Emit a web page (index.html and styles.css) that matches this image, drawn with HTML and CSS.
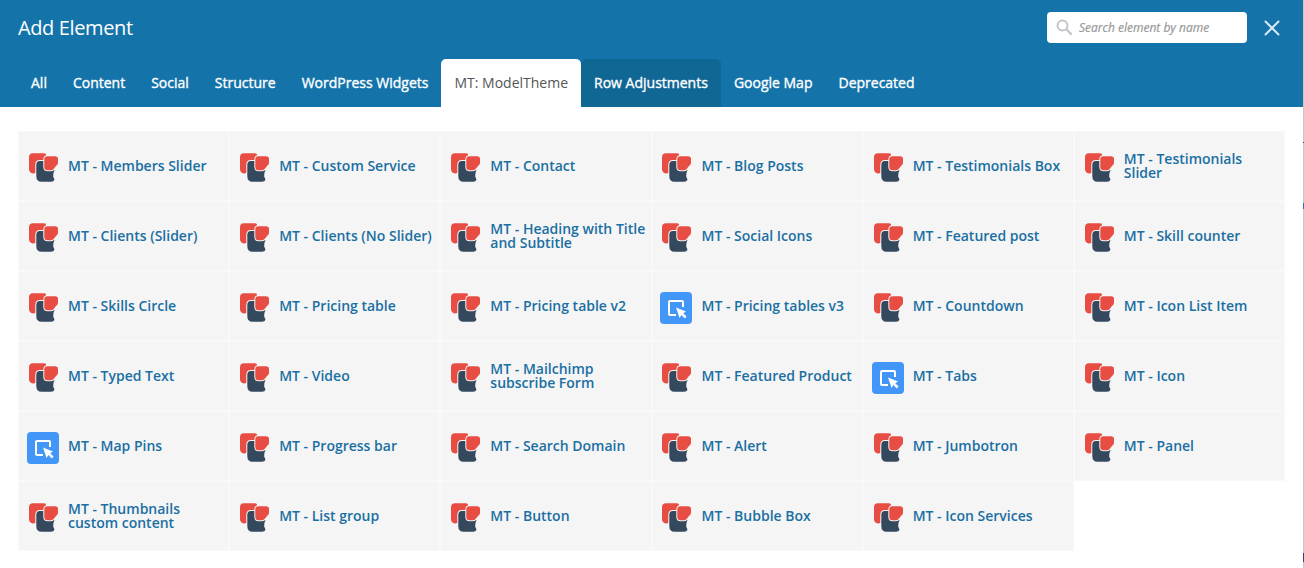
FILE: index.html
```html
<!DOCTYPE html>
<html lang="en">
<head>
<meta charset="utf-8">
<title>Add Element</title>
<link rel="stylesheet" href="styles.css">
</head>
<body>
<svg class="defs" aria-hidden="true">
  <symbol id="mt" viewBox="0 0 32 32">
    <path fill="#e84d44" d="M6 1.200H17Q19.500 1.200 19 3.500L18 8L10 20.300Q8 21.600 6 21.400Q2 21 2 17V5.200Q2 1.200 6 1.200Z"/>
    <path fill="#35495e" stroke="#f5f5f5" stroke-width="2" paint-order="stroke" d="M12.800 9H18V18H27.500Q26 21 26.200 24.500L27.500 27.500Q27 29.800 24 29.800H14.500Q9.300 29.800 9.300 24V13Q9.300 9 12.800 9Z"/>
    <path fill="#e84d44" stroke="#f5f5f5" stroke-width="2" paint-order="stroke" d="M20.500 4.200H28Q31 4.200 31 7V11Q31 12.500 29 14L27 16.500Q26 18.200 24 18.200H20.500Q17.300 18.200 17.300 15V7.500Q17.300 4.200 20.500 4.200Z"/>
  </symbol>
  <symbol id="pick" viewBox="0 0 32 32">
    <rect width="32" height="32" rx="4" fill="#4296f7"/>
    <path fill="none" stroke="#fff" stroke-width="2" stroke-linejoin="round" d="M16 23H10Q9 23 9 22V10Q9 9 10 9H22Q23 9 23 10V15"/>
    <path fill="#fff" d="M16 15.500L26 19.400L23.200 21.200L26.600 24.600L24.800 26.400L21.400 23L19.600 26Z"/>
  </symbol>
</svg>
<div class="page">
<div class="panel">
  <header class="header">
    <div class="topbar">
      <h1 class="title">Add Element</h1>
      <label class="search">
        <svg class="search-icon" viewBox="0 0 18 18"><circle cx="6.500" cy="6.500" r="5" fill="none" stroke="#c3c5cb" stroke-width="2"/><path d="M10.300 10.300L15.600 15.600" stroke="#c3c5cb" stroke-width="2.200"/></svg>
        <input class="search-input" type="text" placeholder="Search element by name">
      </label>
      <svg class="close" viewBox="0 0 16 16"><path d="M1.500 1.500L14.500 14.500M14.500 1.500L1.500 14.500" stroke="#d9e9f4" stroke-width="2" stroke-linecap="round"/></svg>
    </div>
    <nav class="tabs">
      <a class="tab">All</a>
      <a class="tab">Content</a>
      <a class="tab">Social</a>
      <a class="tab">Structure</a>
      <a class="tab">WordPress Widgets</a>
      <a class="tab active">MT: ModelTheme</a>
      <a class="tab hover">Row Adjustments</a>
      <a class="tab">Google Map</a>
      <a class="tab">Deprecated</a>
    </nav>
  </header>
  <main class="grid">
    <div class="item"><svg class="icon"><use href="#mt"/></svg><span class="label">MT - Members Slider</span></div>
    <div class="item"><svg class="icon"><use href="#mt"/></svg><span class="label">MT - Custom Service</span></div>
    <div class="item"><svg class="icon"><use href="#mt"/></svg><span class="label">MT - Contact</span></div>
    <div class="item"><svg class="icon"><use href="#mt"/></svg><span class="label">MT - Blog Posts</span></div>
    <div class="item"><svg class="icon"><use href="#mt"/></svg><span class="label">MT - Testimonials Box</span></div>
    <div class="item"><svg class="icon"><use href="#mt"/></svg><span class="label">MT - Testimonials Slider</span></div>
    <div class="item"><svg class="icon"><use href="#mt"/></svg><span class="label">MT - Clients (Slider)</span></div>
    <div class="item"><svg class="icon"><use href="#mt"/></svg><span class="label">MT - Clients (No Slider)</span></div>
    <div class="item"><svg class="icon"><use href="#mt"/></svg><span class="label">MT - Heading with Title and Subtitle</span></div>
    <div class="item"><svg class="icon"><use href="#mt"/></svg><span class="label">MT - Social Icons</span></div>
    <div class="item"><svg class="icon"><use href="#mt"/></svg><span class="label">MT - Featured post</span></div>
    <div class="item"><svg class="icon"><use href="#mt"/></svg><span class="label">MT - Skill counter</span></div>
    <div class="item"><svg class="icon"><use href="#mt"/></svg><span class="label">MT - Skills Circle</span></div>
    <div class="item"><svg class="icon"><use href="#mt"/></svg><span class="label">MT - Pricing table</span></div>
    <div class="item"><svg class="icon"><use href="#mt"/></svg><span class="label">MT - Pricing table v2</span></div>
    <div class="item"><svg class="icon"><use href="#pick"/></svg><span class="label">MT - Pricing tables v3</span></div>
    <div class="item"><svg class="icon"><use href="#mt"/></svg><span class="label">MT - Countdown</span></div>
    <div class="item"><svg class="icon"><use href="#mt"/></svg><span class="label">MT - Icon List Item</span></div>
    <div class="item"><svg class="icon"><use href="#mt"/></svg><span class="label">MT - Typed Text</span></div>
    <div class="item"><svg class="icon"><use href="#mt"/></svg><span class="label">MT - Video</span></div>
    <div class="item"><svg class="icon"><use href="#mt"/></svg><span class="label">MT - Mailchimp subscribe Form</span></div>
    <div class="item"><svg class="icon"><use href="#mt"/></svg><span class="label">MT - Featured Product</span></div>
    <div class="item"><svg class="icon"><use href="#pick"/></svg><span class="label">MT - Tabs</span></div>
    <div class="item"><svg class="icon"><use href="#mt"/></svg><span class="label">MT - Icon</span></div>
    <div class="item"><svg class="icon"><use href="#pick"/></svg><span class="label">MT - Map Pins</span></div>
    <div class="item"><svg class="icon"><use href="#mt"/></svg><span class="label">MT - Progress bar</span></div>
    <div class="item"><svg class="icon"><use href="#mt"/></svg><span class="label">MT - Search Domain</span></div>
    <div class="item"><svg class="icon"><use href="#mt"/></svg><span class="label">MT - Alert</span></div>
    <div class="item"><svg class="icon"><use href="#mt"/></svg><span class="label">MT - Jumbotron</span></div>
    <div class="item"><svg class="icon"><use href="#mt"/></svg><span class="label">MT - Panel</span></div>
    <div class="item"><svg class="icon"><use href="#mt"/></svg><span class="label">MT - Thumbnails custom content</span></div>
    <div class="item"><svg class="icon"><use href="#mt"/></svg><span class="label">MT - List group</span></div>
    <div class="item"><svg class="icon"><use href="#mt"/></svg><span class="label">MT - Button</span></div>
    <div class="item"><svg class="icon"><use href="#mt"/></svg><span class="label">MT - Bubble Box</span></div>
    <div class="item"><svg class="icon"><use href="#mt"/></svg><span class="label">MT - Icon Services</span></div>
  </main>
</div>
<div class="edge"></div>
</div>
</body>
</html>
```
FILE: styles.css
```css
* { box-sizing: border-box; }
body {
  margin: 0;
  background: #fff;
  font-family: "Open Sans", "Noto Sans", sans-serif;
  overflow: hidden;
}
.defs { display: none; }
.page { display: flex; height: 568px; }
.panel { flex: 1; min-width: 0; }
/* sliver of the page behind the panel */
.edge {
  width: 1px;
  background: linear-gradient(#c8c8c8 0 142px, #444 142px 143px, #c8c8c8 143px 203px, #3f6ea5 203px 209px, #c8c8c8 209px 553px, #3b3b78 553px 562px, #c8c8c8 562px);
}
.header {
  display: flex;
  flex-direction: column;
  justify-content: space-between;
  height: 107px;
  padding: 12px 0 0 18px;
  background: #1474aa;
}
.topbar {
  display: flex;
  align-items: center;
  height: 31px;
  padding-right: 23px;
}
.title {
  flex: 1;
  margin: 0;
  color: #fff;
  font-size: 20px;
  font-weight: 400;
  letter-spacing: -0.38px;
  line-height: 31px;
}
.search {
  display: flex;
  align-items: center;
  width: 200px;
  height: 31px;
  padding-left: 9px;
  border-radius: 4px;
  background: #fff;
}
.search-icon { width: 18px; height: 18px; }
.search-input {
  flex: 1;
  min-width: 0;
  margin-left: 5px;
  padding: 0;
  border: 0;
  outline: 0;
  background: none;
  font: italic 400 12px "Open Sans", sans-serif;
}
.search-input::placeholder { color: #999; opacity: 1; -webkit-text-stroke: 0.2px #999; }
.close { width: 16px; height: 16px; margin-left: 17px; }
.tabs { display: flex; height: 48px; }
.tab {
  padding: 0 13px;
  border-radius: 5px 5px 0 0;
  color: #fff;
  font-size: 14px;
  font-weight: 400;
  line-height: 48px;
  white-space: nowrap;
  -webkit-text-stroke: 0.35px #fff;
}
.tab.active { background: #fff; color: #555; -webkit-text-stroke: 0; }
.tab.hover { background: #116794; }
.grid {
  display: grid;
  grid-template-columns: repeat(6, 1fr);
  grid-auto-rows: 70px;
  padding: 24px 18px 0 18px;
}
.item {
  display: flex;
  align-items: center;
  gap: 9.1px;
  min-width: 0;
  padding-left: 7.9px;
  border: 1px solid #f9f9f9;
  background: #f5f5f5;
}
.icon { flex: none; width: 32px; height: 32px; margin-top: 4px; }
.label {
  color: #1a6fa3;
  font-size: 14px;
  font-weight: 600;
  line-height: 14px;
}
```
